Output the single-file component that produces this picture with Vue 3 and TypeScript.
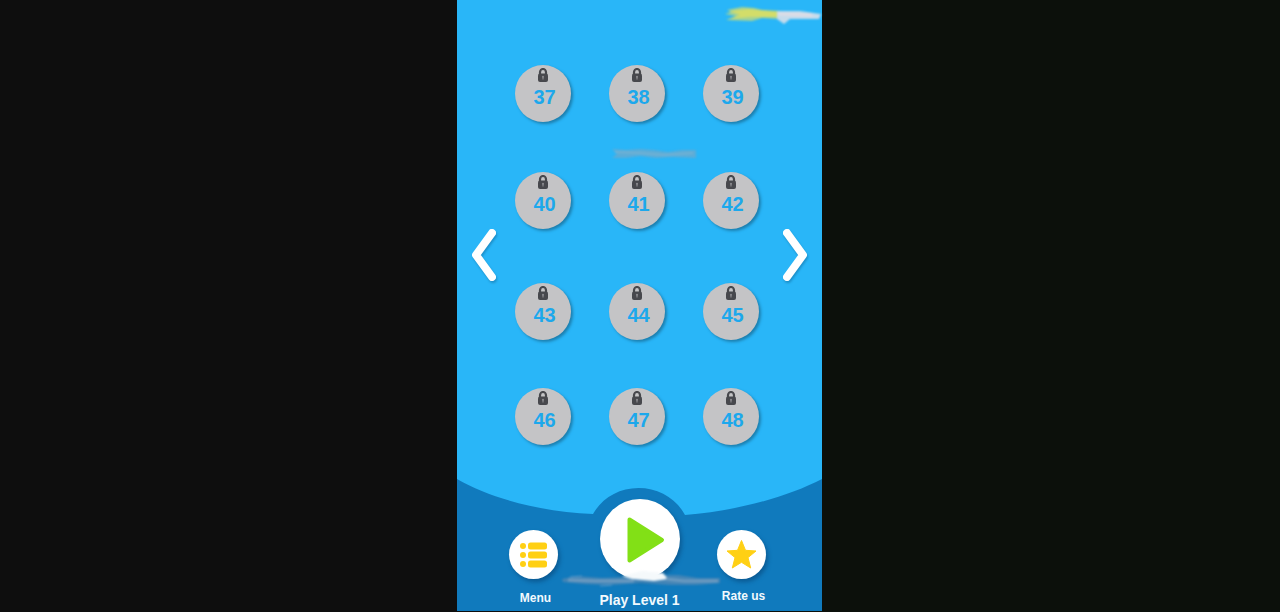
<script setup lang="ts">
const levels: number[] = Array.from({ length: 12 }, (_, i) => 37 + i)
</script>

<template>
  <div class="page">
    <main class="game">
      <svg class="streak streak-top" viewBox="0 0 100 20" aria-hidden="true">
        <path d="M5 8 L20 5 L32 6 L40 8 L60 9 L58 17 L40 16 L30 19 L4 18 L14 14 L3 12 L9 10Z" fill="#a3d296" />
        <path d="M8 9 L26 7 L58 10 L57 15 L28 15 L8 17 L18 13Z" fill="#d3dd69" />
        <path d="M55 9 L78 9 L99 12 L97 17 L68 17 L62 22 L55 17Z" fill="#c6dbeb" />
        <path d="M56 12 L90 13" stroke="#dedce5" stroke-width="3" />
      </svg>
      <svg class="streak streak-mid" viewBox="0 0 84 12" aria-hidden="true">
        <path d="M0 1 L14 2 L28 1 L42 2 L56 4 L70 2 L84 2 L84 10 L60 9 L44 10 L28 8 L14 10 L0 10 L5 6Z" fill="#5cacd7" />
        <path d="M3 4 L28 5 L52 7 L81 5" stroke="#72b2d4" stroke-width="2" fill="none" />
      </svg>

      <section class="board">
        <button class="arrow" type="button" aria-label="Previous levels">
          <svg viewBox="0 0 30 56"><path d="M22 6 L6 28 L22 50" /></svg>
        </button>
        <div class="levels">
          <button v-for="level in levels" :key="level" class="level" type="button">
            <svg class="lock" viewBox="0 0 10 14" aria-hidden="true">
              <path d="M2 7V4.200a3 3.200 0 0 1 6 0V7" fill="none" stroke="#47484d" stroke-width="2.200" />
              <rect x="0" y="5.500" width="10" height="8.500" rx="2" fill="#47484d" />
              <path d="M5 7.800a1.100 1.100 0 0 1 .6 2v1.800H4.400v-1.800a1.100 1.100 0 0 1 .6-2z" fill="#8a8a8e" />
            </svg>
            <span class="number">{{ level }}</span>
          </button>
        </div>
        <button class="arrow next" type="button" aria-label="Next levels">
          <svg viewBox="0 0 30 56"><path d="M8 6 L24 28 L8 50" /></svg>
        </button>
      </section>

      <footer class="dock">
        <svg class="hill" viewBox="0 0 365 133" preserveAspectRatio="none" aria-hidden="true">
          <path
            d="M0 1 C35 21 85 34 136 36 C145 20 162 10 181.500 10 C201 10 219 20 228 37 C280 33 330 19 365 1 V133 H0Z"
            fill="#107abd"
          />
        </svg>
        <button class="action menu" type="button">
          <span class="disc">
            <svg viewBox="0 0 49 49" aria-hidden="true">
              <g fill="#ffd014">
                <circle cx="14" cy="16" r="3" /><rect x="19" y="12.500" width="19" height="7" rx="2.500" />
                <circle cx="14" cy="25" r="3" /><rect x="19" y="21.500" width="19" height="7" rx="2.500" />
                <circle cx="14" cy="34" r="3" /><rect x="19" y="30.500" width="19" height="7" rx="2.500" />
              </g>
            </svg>
          </span>
          <span class="label">Menu</span>
        </button>
        <button class="action play" type="button">
          <span class="disc">
            <svg viewBox="0 0 80 80" aria-hidden="true">
              <path d="M29.500 20.500 L62 41 L29.500 61.500Z" fill="#82e016" stroke="#82e016" stroke-width="4" stroke-linejoin="round" />
            </svg>
          </span>
          <span class="label">Play Level 1</span>
        </button>
        <button class="action rate" type="button">
          <span class="disc">
            <svg viewBox="0 0 49 49" aria-hidden="true">
              <path
                d="M24.500 10.500 L28.500 20.300 L39 21 L31 27.600 L33.700 38 L24.500 32.300 L15.300 38 L18 27.600 L10 21 L20.500 20.300Z"
                fill="#ffd014" stroke="#ffd014" stroke-width="1" stroke-linejoin="round"
              />
            </svg>
          </span>
          <span class="label">Rate us</span>
        </button>
        <svg class="streak streak-dock" viewBox="0 0 160 14" aria-hidden="true">
          <path d="M0 6 L14 3 L40 5 L68 4 L86 3 L104 2 L116 2 L136 5 L158 5 L158 10 L134 12 L108 12 L78 10 L48 12 L22 11 L1 9Z" fill="#4485b6" />
          <path d="M60 3 L70 6 L92 8 L106 6 L101 0 L80 -2Z" fill="#f5f9fb" />
          <path d="M6 7 L34 8 L72 8 M104 6 L122 8 L156 8" stroke="#6c9bc1" stroke-width="3" fill="none" />
          <path d="M38 13 L50 12 M8 4 L20 3" stroke="#5a9bcb" stroke-width="1" />
        </svg>
      </footer>
    </main>
  </div>
</template>

<style>
body {
  margin: 0;
  background: #0d0d0d;
}
</style>

<style scoped>
.page {
  box-sizing: border-box;
  display: flex;
  justify-content: center;
  min-height: 100vh;
  padding: 0 1px 1px 0;
  background: linear-gradient(90deg, #0e0e0e 50%, #0c100b 50%);
  font-family: "Liberation Sans", Arial, sans-serif;
}
.game {
  position: relative;
  display: flex;
  flex-direction: column;
  justify-content: space-between;
  width: 100%;
  max-width: 365px;
  background: #29b6f8;
}
button {
  padding: 0;
  border: 0;
  background: none;
  font: inherit;
  cursor: pointer;
}
svg {
  display: block;
}
.board {
  display: flex;
  justify-content: space-between;
  align-items: center;
  padding: 65px 13px 0;
}
.levels {
  display: grid;
  grid-template-columns: repeat(3, 56px);
  grid-template-rows: 107px 111px 105px 57px;
  column-gap: 38px;
  margin-right: 5px;
}
.level {
  display: flex;
  flex-direction: column;
  align-items: center;
  box-sizing: border-box;
  width: 56px;
  height: 57px;
  padding-top: 3px;
  border-radius: 50%;
  background: #c4c4c6;
  box-shadow: 2px 2px 3px #1c7faf;
}
.lock {
  width: 10px;
  height: 14px;
}
.number {
  padding-left: 3px;
  color: #1ca8ec;
  font-size: 20px;
  font-weight: bold;
  line-height: 30px;
}
.arrow {
  width: 30px;
}
.arrow svg {
  width: 30px;
  height: 56px;
  filter: drop-shadow(1px 2px 1px #1c8fc9);
}
.arrow path {
  fill: none;
  stroke: #fff;
  stroke-width: 8;
  stroke-linecap: round;
  stroke-linejoin: round;
}
.dock {
  position: relative;
  display: grid;
  grid-template-columns: 105px 107px 97px;
  justify-content: center;
  align-items: start;
  box-sizing: border-box;
  height: 133px;
  padding-right: 8px;
}
.hill {
  position: absolute;
  inset: 0;
  width: 100%;
  height: 100%;
}
.action {
  position: relative;
  display: flex;
  flex-direction: column;
  align-items: center;
  margin-top: 52px;
  color: #f2f9fd;
  font-size: 12px;
  font-weight: bold;
  line-height: 16px;
}
.disc {
  width: 49px;
  height: 49px;
  border-radius: 50%;
  background: #fff;
  box-shadow: 2px 3px 4px #0b5b94;
}
.label {
  padding-left: 4px;
  white-space: nowrap;
}
.menu {
  gap: 11px;
}
.rate {
  gap: 9px;
}
.play {
  gap: 13px;
  margin-top: 21px;
  font-size: 14px;
}
.play .label {
  padding-left: 0;
}
.play .disc {
  width: 80px;
  height: 80px;
}
.streak {
  position: absolute;
  overflow: visible;
  filter: blur(1px);
  pointer-events: none;
}
.streak-top {
  top: 2px;
  right: 0;
  width: 100px;
}
.streak-mid {
  top: 148px;
  left: 155px;
  width: 84px;
}
.streak-dock {
  bottom: 24px;
  left: 105px;
  width: 160px;
}
</style>
